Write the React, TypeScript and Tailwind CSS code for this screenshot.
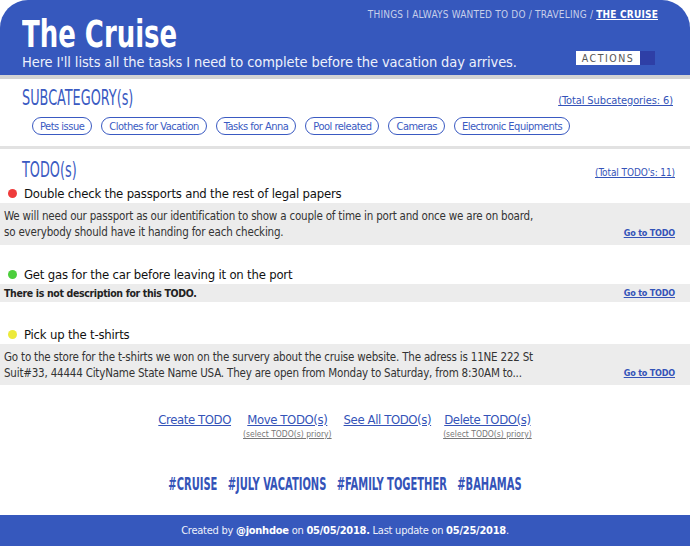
import React from "react";

const body = "font-['DejaVu_Sans_Condensed','DejaVu_Sans',sans-serif]";

const chips = ["Pets issue", "Clothes for Vacation", "Tasks for Anna", "Pool releated", "Cameras", "Electronic Equipments"];

function GoTo() {
  return (
    <a className="block text-[9px] font-bold text-[#3453b8] underline whitespace-nowrap leading-none tracking-[-0.2px]">Go to TODO</a>
  );
}

function Todo({ color, title, children, bold, boxH }: { color: string; title: string; children: React.ReactNode; bold?: boolean; boxH: string }) {
  return (
    <div className="flex flex-col">
      <div className="flex items-center h-[16px] pl-[8px]">
        <span className={`w-[9px] h-[9px] rounded-full ${color}`} />
        <span className="ml-[7px] text-[13px] tracking-[-0.2px] text-[#111] leading-none">{title}</span>
      </div>
      <div className={`mt-[2px] bg-[#ececec] flex items-end justify-between pl-[4px] pr-[15px] ${boxH}`}>
        <div className={`self-center leading-[16px] ${bold ? "text-[10.5px] tracking-[-0.35px] font-bold text-[#222]" : "text-[11.5px] tracking-[-0.2px] text-[#333]"}`}>{children}</div>
        <div className={`leading-none ${bold ? "self-center" : "pb-[7px]"}`}><GoTo /></div>
      </div>
    </div>
  );
}

function ActionLink({ label, sub }: { label: string; sub?: boolean }) {
  return (
    <div className="flex flex-col items-center">
      <a className="text-[13px] tracking-[-0.4px] text-[#3453b8] underline leading-[16px]">{label}</a>
      {sub && <span className="text-[8.5px] text-[#777] underline leading-[10px] mt-[1px]">(select TODO(s) priory)</span>}
    </div>
  );
}

export default function App() {
  return (
    <div className={`w-[690px] h-[546px] bg-white flex flex-col ${body}`}>
      <header className="h-[75px] bg-[#3658bd] rounded-t-[28px] grid grid-cols-1 pl-[22px] pr-[35px]">
        <div className="col-start-1 row-start-1 justify-self-start flex flex-col pt-[16px]">
          <h1 className="text-[37px] font-bold text-white leading-[38px] origin-left scale-x-[0.78] whitespace-nowrap">The Cruise</h1>
          <p className="text-[14.5px] tracking-[-0.1px] text-[#eef1fb] leading-[16px] mt-[0px] whitespace-nowrap">Here I'll lists all the tasks I need to complete before the vacation day arrives.</p>
        </div>
        <div className="col-start-1 row-start-1 justify-self-end flex flex-col items-end justify-between pt-[10px] pb-[10px]">
          <nav className="text-[10px] text-[#c7cfea] tracking-[0.2px] leading-none mr-[-3px] whitespace-nowrap">
            THINGS I ALWAYS WANTED TO DO / TRAVELING / <a className="text-white font-bold underline">THE CRUISE</a>
          </nav>
          <div className="flex h-[14px]">
            <div className="w-[64px] bg-white flex items-center justify-center text-[10.5px] text-[#555] tracking-[1.5px] leading-none">ACTIONS</div>
            <div className="w-[15px] bg-[#2e3fa6]" />
          </div>
        </div>
      </header>
      <div className="h-[4px] bg-[#d3d3d3]" />

      <section className="h-[67px] pt-[9px] pl-[22px] pr-[17px] flex flex-col">
        <div className="flex justify-between items-end">
          <h2 className="text-[21px] text-[#3a5ac2] leading-[20px] origin-left scale-x-[0.68] whitespace-nowrap">SUBCATEGORY(s)</h2>
          <a className="text-[11px] tracking-[-0.1px] text-[#3453b8] underline leading-none mb-[2px]">(Total Subcategories: 6)</a>
        </div>
        <div className="flex gap-[9px] ml-[10px] mt-[9px]">
          {chips.map((c) => (
            <span key={c} className="h-[18px] px-[7px] rounded-full border-[1.5px] border-[#3a5ac2] text-[11px] tracking-[-0.5px] text-[#3a5ac2] flex items-center leading-none whitespace-nowrap">{c}</span>
          ))}
        </div>
      </section>
      <div className="h-[3px] bg-[#e2e2e2]" />

      <section className="pt-[11px] flex flex-col">
        <div className="flex justify-between items-end pl-[22px] pr-[15px]">
          <h2 className="text-[21px] text-[#3a5ac2] leading-[20px] origin-left scale-x-[0.68] whitespace-nowrap">TODO(s)</h2>
          <a className="text-[10px] tracking-[-0.1px] text-[#3453b8] underline leading-none mb-[2px]">(Total TODO's: 11)</a>
        </div>
        <div className="mt-[5px] flex flex-col gap-[21px]">
          <Todo color="bg-[#ef3b3b]" title="Double check the passports and the rest of legal papers" boxH="h-[42px]">
            We will need our passport as our identification to show a couple of time in port and once we are on board,<br />so everybody should have it handing for each checking.
          </Todo>
          <Todo color="bg-[#4cce3c]" title="Get gas for the car before leaving it on the port" bold boxH="h-[18px]">
            There is not description for this TODO.
          </Todo>
          <div className="mt-[3px]">
            <Todo color="bg-[#ecea3a]" title="Pick up the t-shirts" boxH="h-[41px]">
              Go to the store for the t-shirts we won on the survery about the cruise website. The adress is 11NE 222 St<br />Suit#33, 44444 CityName State Name USA. They are open from Monday to Saturday, from 8:30AM to...
            </Todo>
          </div>
        </div>
      </section>

      <div className="flex justify-center gap-[12px] mt-[27px]">
        <ActionLink label="Create TODO" />
        <ActionLink label="Move TODO(s)" sub />
        <ActionLink label="See All TODO(s)" />
        <ActionLink label="Delete TODO(s)" sub />
      </div>

      <div className="flex justify-center gap-[16px] mt-[37px] text-[17px] font-bold text-[#3453b8] leading-none scale-x-[0.65] whitespace-nowrap">
        <span>#CRUISE</span>
        <span>#JULY VACATIONS</span>
        <span>#FAMILY TOGETHER</span>
        <span>#BAHAMAS</span>
      </div>

      <footer className="mt-auto h-[31px] bg-[#3658bd] flex items-center justify-center text-[11px] tracking-[-0.25px] text-[#eef1fb] leading-none">
        <span>Created by <b className="text-white">@jonhdoe</b> on <b className="text-white">05/05/2018.</b> Last update on <b className="text-white">05/25/2018</b>.</span>
      </footer>
    </div>
  );
}
